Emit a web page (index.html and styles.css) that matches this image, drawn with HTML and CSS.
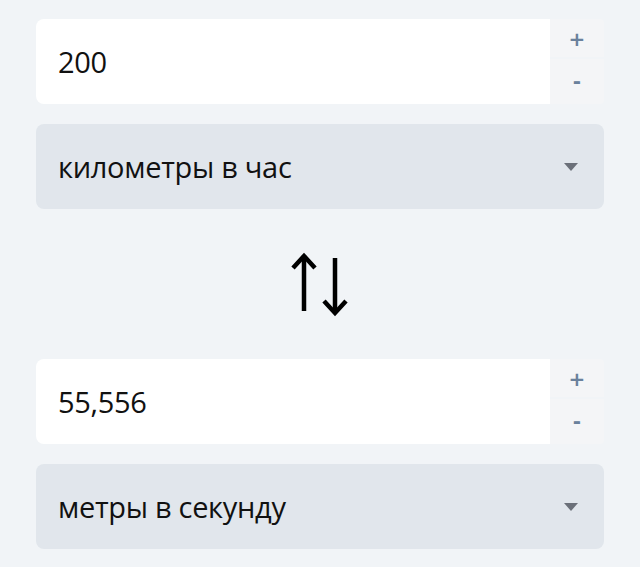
FILE: index.html
```html
<!DOCTYPE html>
<html lang="ru">
<head>
    <meta charset="UTF-8">
    <meta name="viewport" content="width=device-width, initial-scale=1.0">
    <title>Конвертер скорости</title>
    <link rel="stylesheet" href="styles.css">
</head>
<body>
    <div class="converter">
        <div class="number-field">
            <input type="text" id="from-value" value="200">
            <div class="steps">
                <button type="button" class="step step-up">+</button>
                <button type="button" class="step step-down">-</button>
            </div>
        </div>
        <div class="unit-select">
            <span>километры в час</span>
            <span class="caret"></span>
        </div>

        <div class="swap">
            <svg width="60" height="66" viewBox="0 0 60 66" fill="none" stroke="#000" stroke-width="4.5">
                <path d="M14 60 V5"/>
                <path d="M3 17 L14 5 L25 17"/>
                <path d="M45 7 V62"/>
                <path d="M34 50 L45 62 L56 50"/>
            </svg>
        </div>

        <div class="number-field">
            <input type="text" id="to-value" value="55,556">
            <div class="steps">
                <button type="button" class="step step-up">+</button>
                <button type="button" class="step step-down">-</button>
            </div>
        </div>
        <div class="unit-select">
            <span>метры в секунду</span>
            <span class="caret"></span>
        </div>
    </div>
</body>
</html>
```

FILE: styles.css
```css
body {
    margin: 0;
    padding: 19px 36px;
    background-color: #f1f4f7;
    font-family: "Open Sans", "Noto Sans", sans-serif;
    color: #111;
}
.converter {
    display: flex;
    flex-direction: column;
}
.number-field {
    display: flex;
    height: 85px;
}
.number-field input {
    flex: 1;
    min-width: 0;
    border: none;
    outline: none;
    border-radius: 8px 0 0 8px;
    background-color: #fff;
    padding: 0 22px;
    font-family: inherit;
    font-size: 29px;
    letter-spacing: -0.3px;
    color: #111;
}
.steps {
    width: 54px;
    display: flex;
    flex-direction: column;
    gap: 2px;
}
.step {
    border: none;
    padding: 0;
    background-color: #f4f5f7;
    color: #6a819c;
    font-family: "DejaVu Sans", sans-serif;
    font-size: 20px;
    font-weight: bold;
    cursor: pointer;
}
.step-up {
    height: 38px;
    padding-top: 1px;
    border-radius: 0 4px 0 0;
}
.step-down {
    flex: 1;
    padding-bottom: 1px;
    border-radius: 0 0 4px 0;
}
.unit-select {
    margin-top: 20px;
    height: 85px;
    display: flex;
    align-items: center;
    justify-content: space-between;
    padding: 0 26px 0 22px;
    border-radius: 8px;
    background-color: #e1e6ec;
    font-size: 29px;
    letter-spacing: -0.3px;
}
.caret {
    width: 0;
    height: 0;
    border-left: 7px solid transparent;
    border-right: 7px solid transparent;
    border-top: 8px solid #6b7079;
}
.swap {
    height: 150px;
    display: flex;
    align-items: center;
    justify-content: center;
}
```
